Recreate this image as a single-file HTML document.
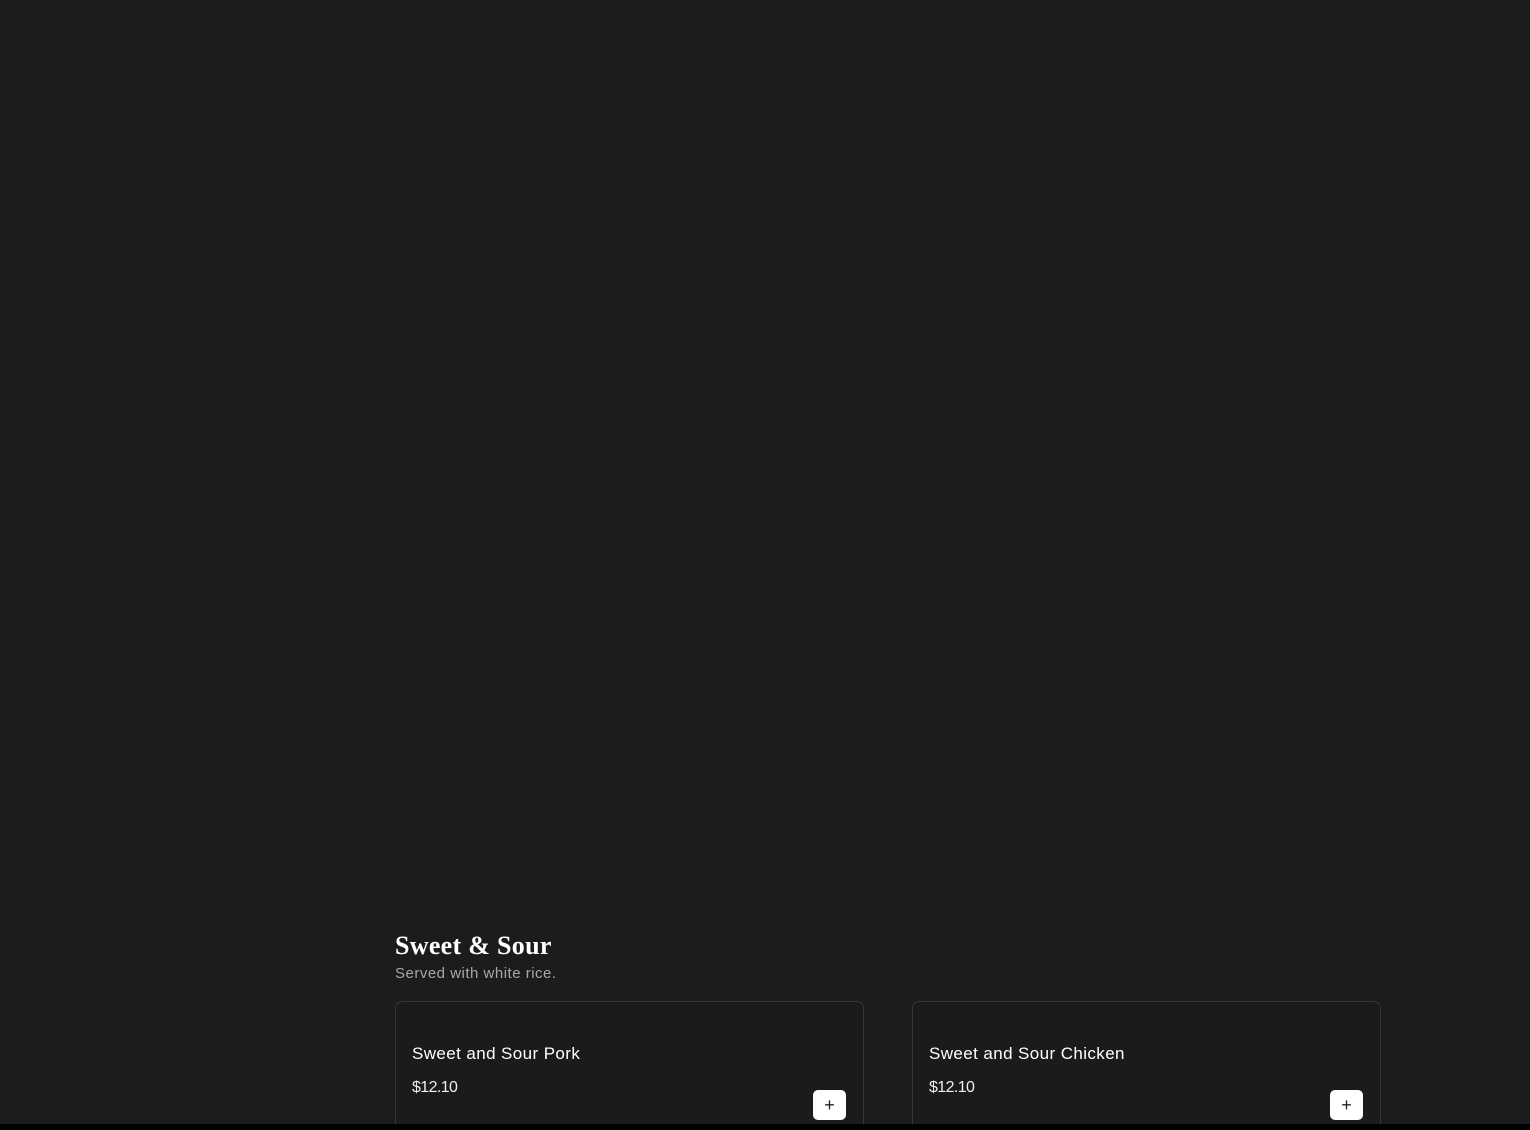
<!DOCTYPE html>
<html><head><meta charset="utf-8"><style>
html,body{margin:0;padding:0;width:1530px;height:1130px;overflow:hidden;}
body{background:#1c1c1c;position:relative;font-family:"Liberation Sans",sans-serif;color:#fff;}
.h{position:absolute;left:395px;top:931px;font-family:"Liberation Serif",serif;font-weight:900;font-size:26px;letter-spacing:0.3px;color:#fff;}
.sub{position:absolute;left:395px;top:965px;font-size:15px;letter-spacing:0.5px;color:#a8a8a8;}
.card{position:absolute;top:1001px;width:467px;height:140px;border:1px solid #363636;border-radius:7px;background:#1b1b1b;}
.name{position:absolute;left:16px;top:42px;font-size:17px;letter-spacing:0.4px;color:#fff;}
.price{position:absolute;left:16px;top:77px;font-size:16px;letter-spacing:-0.6px;color:#eee;}
.btn{position:absolute;left:417px;top:88px;width:33px;height:30px;background:#fff;border-radius:5px;color:#222;font-size:18px;text-align:center;line-height:30px;}
.bar{position:absolute;left:0;top:1124px;width:1530px;height:6px;background:#000;}
</style></head><body>
<div class="h">Sweet &amp; Sour</div>
<div class="sub">Served with white rice.</div>
<div class="card" style="left:395px"><div class="name">Sweet and Sour Pork</div><div class="price">$12.10</div><div class="btn">+</div></div>
<div class="card" style="left:912px"><div class="name">Sweet and Sour Chicken</div><div class="price">$12.10</div><div class="btn">+</div></div>
<div class="bar"></div>
</body></html>
